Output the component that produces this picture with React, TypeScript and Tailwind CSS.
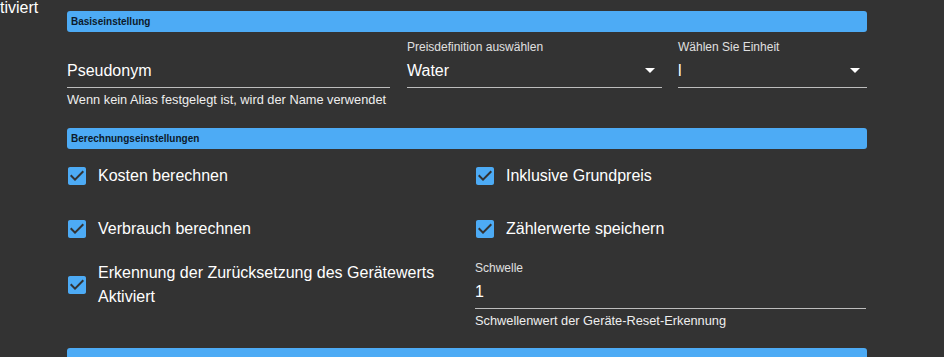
import type { ReactNode } from "react";

// settings panel (dark), clipped on the left by the scroll container

function SectionHeader({ title }: { title: string }) {
  return (
    <div className="flex h-[21px] items-center rounded-[3px] bg-[#4dabf5] px-[4px] text-[10px] font-bold text-[#0c1a2b]">
      {title}
    </div>
  );
}

function CheckIcon() {
  return (
    <svg width="24" height="24" viewBox="0 0 24 24" className="-ml-[2px] shrink-0" aria-hidden>
      <path
        fill="#4dabf5"
        d="M19 3H5c-1.11 0-2 .9-2 2v14c0 1.1.89 2 2 2h14c1.11 0 2-.9 2-2V5c0-1.1-.89-2-2-2zm-9 14l-5-5 1.41-1.41L10 14.17l7.59-7.59L19 8l-9 9z"
      />
    </svg>
  );
}

function CheckItem({ children, tall }: { children: ReactNode; tall?: boolean }) {
  return (
    <div className={tall ? "flex h-[48px] items-center" : "flex h-[42px] items-center"}>
      <CheckIcon />
      <span className="ml-[9px] text-[16px] leading-[24px] text-white">{children}</span>
    </div>
  );
}

function Arrow() {
  return (
    <svg width="10" height="5" viewBox="0 0 10 5" className="shrink-0" aria-hidden>
      <path d="M0 0h10L5 5z" fill="#ffffff" />
    </svg>
  );
}

function Field({
  width,
  label,
  value,
  helper,
  select,
}: {
  width: string;
  label?: string;
  value: string;
  helper?: string;
  select?: boolean;
}) {
  return (
    <div className={width}>
      <div className="h-[14px] text-[12px] leading-[14px] text-[#e0e0e0]">{label}</div>
      <div className="flex h-[34px] items-center justify-between border-b border-[#bdbdbd] pr-[7px] text-[16px] text-white">
        <span>{value}</span>
        {select && <Arrow />}
      </div>
      {helper && <p className="mt-[4px] text-[12.8px] leading-[16px] text-[#eeeeee]">{helper}</p>}
    </div>
  );
}

export default function App() {
  return (
    <div className="h-[357px] w-[944px] overflow-hidden bg-[#333333] font-['Liberation_Sans',Arial,sans-serif] text-white">
      <div className="flex">
        <div className="w-[67px] shrink-0 -mt-[1px] text-[16px] leading-[18px]">tiviert</div>
        <div className="w-[800px] pt-[11px]">
          <SectionHeader title="Basiseinstellung" />
          <div className="mt-[8px] flex">
            <Field
              width="w-[323px]"
              value="Pseudonym"
              helper="Wenn kein Alias festgelegt ist, wird der Name verwendet"
            />
            <Field width="ml-[17px] w-[255px]" label="Preisdefinition auswählen" value="Water" select />
            <Field width="ml-[16px] w-[189px]" label="Wählen Sie Einheit" value="l" select />
          </div>

          <div className="mt-[20px]">
            <SectionHeader title="Berechnungseinstellungen" />
          </div>
          <div className="mt-[6px] grid grid-cols-[408px_392px] items-start gap-y-[11px]">
            <CheckItem>Kosten berechnen</CheckItem>
            <CheckItem>Inklusive Grundpreis</CheckItem>
            <CheckItem>Verbrauch berechnen</CheckItem>
            <CheckItem>Zählerwerte speichern</CheckItem>
            <CheckItem tall>
              Erkennung der Zurücksetzung des Gerätewerts
              <br />
              Aktiviert
            </CheckItem>
            <Field
              width="w-[391px]"
              label="Schwelle"
              value="1"
              helper="Schwellenwert der Geräte-Reset-Erkennung"
            />
          </div>

          <div className="mt-[19px]">
            <SectionHeader title="" />
          </div>
        </div>
      </div>
    </div>
  );
}
